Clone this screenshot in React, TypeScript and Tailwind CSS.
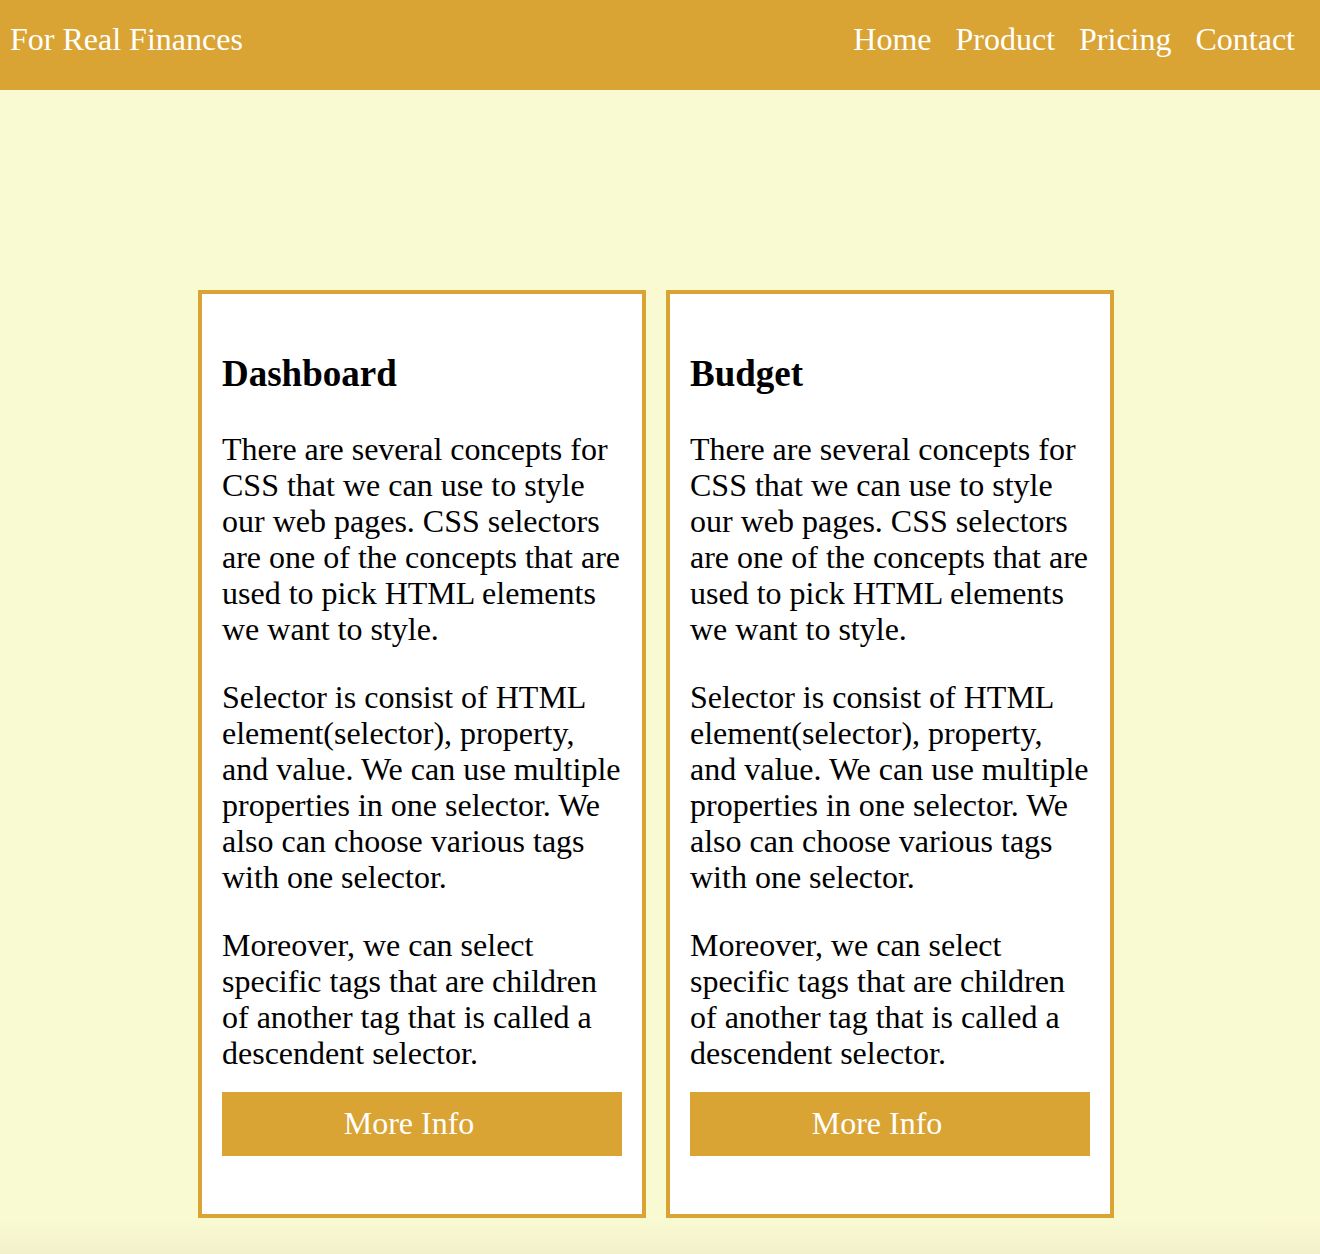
import React from "react";

const paragraphs = [
  "There are several concepts for CSS that we can use to style our web pages. CSS selectors are one of the concepts that are used to pick HTML elements we want to style.",
  "Selector is consist of HTML element(selector), property, and value. We can use multiple properties in one selector. We also can choose various tags with one selector.",
  "Moreover, we can select specific tags that are children of another tag that is called a descendent selector.",
];

function Card({ title }: { title: string }) {
  return (
    <div className="w-[448px] border-[4px] border-[#D9A434] bg-white px-[20px] pb-[58px]">
      <h2 className="mt-[58px] text-[37px] font-bold leading-[43px]">{title}</h2>
      <div className="mt-[36px] flex flex-col gap-[32px]">
        {paragraphs.map((p, i) => (
          <p key={i} className="text-[32px] leading-[36px]">
            {p}
          </p>
        ))}
      </div>
      <button className="mt-[21px] flex h-[64px] w-[400px] items-center justify-center bg-[#D9A434] pb-[3px] pr-[26px] text-[32px] leading-[36px] text-white">
        More Info
      </button>
    </div>
  );
}

export default function App() {
  return (
    <div className="min-h-[1254px] bg-[#FAFAD2] font-['Liberation_Serif',serif] text-black">
      <header className="flex h-[90px] items-start justify-between bg-[#D9A434] pl-[10px] pr-[25px] pt-[21px] text-[32px] leading-[36px] text-white">
        <div>For Real Finances</div>
        <nav className="flex gap-[24px]">
          <a>Home</a>
          <a>Product</a>
          <a>Pricing</a>
          <a>Contact</a>
        </nav>
      </header>
      <main className="flex gap-[20px] pl-[198px] pt-[200px]">
        <Card title="Dashboard" />
        <Card title="Budget" />
      </main>
      <div className="h-[36px] bg-gradient-to-b from-[#FAFAD2] to-[#F1F0CB]" />
    </div>
  );
}
